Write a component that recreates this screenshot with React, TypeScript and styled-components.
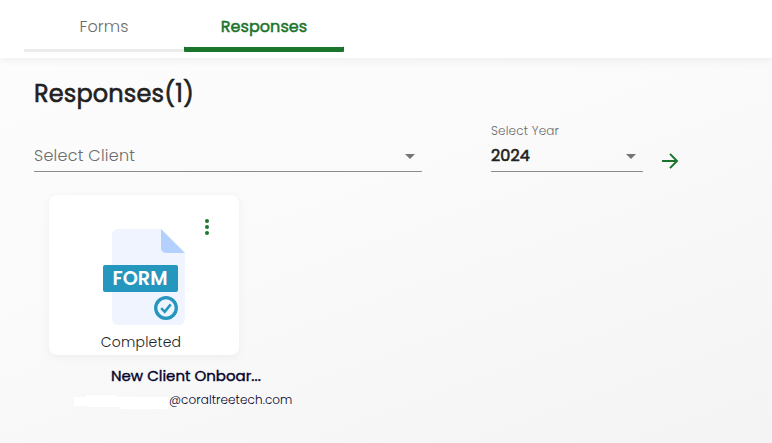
import styled, { createGlobalStyle } from "styled-components";

interface ITab {
  id: number;
  label: string;
}

interface ISelect {
  label?: string;
  value: string;
  width: number;
  isFilled?: boolean;
}

const tabs: ITab[] = [
  { id: 1, label: "Forms" },
  { id: 2, label: "Responses" },
];

const SelectField = ({ label, value, width, isFilled }: ISelect) => {
  return (
    <FieldWrapper $width={width}>
      <FieldLabel>{label}</FieldLabel>
      <FieldControl>
        <FieldValue $filled={isFilled}>{value}</FieldValue>
        <Caret width="10" height="5" viewBox="0 0 10 5">
          <path d="M0 0h10L5 5z" fill="#757575" />
        </Caret>
      </FieldControl>
    </FieldWrapper>
  );
};

const FormIcon = () => (
  <svg width="82" height="96" viewBox="0 0 82 96">
    <path
      d="M15 0H58L82 24V90a6 6 0 0 1-6 6H15a6 6 0 0 1-6-6V6a6 6 0 0 1 6-6z"
      fill="#eff4ff"
    />
    <path d="M58 0L82 24H63a5 5 0 0 1-5-5z" fill="#b3d0ff" />
    <rect x="0" y="36" width="75" height="27" rx="2" fill="#2596be" />
    <text
      x="9.5"
      y="56.4"
      fill="#fff"
      fontFamily="Poppins, Inter, sans-serif"
      fontSize="19.5"
      fontWeight="600"
      textLength="55"
      lengthAdjust="spacingAndGlyphs"
    >
      FORM
    </text>
    <circle cx="63" cy="79" r="10.3" fill="#eff4ff" stroke="#2596be" strokeWidth="3.3" />
    <path d="M58.2 79.2l3.5 3.7 6-7.5" fill="none" stroke="#2596be" strokeWidth="2.5" />
  </svg>
);

const App = () => {
  return (
    <>
      <GlobalStyle />
      <Page>
        <TabBar>
          {tabs.map((tab) => (
            <Tab key={tab.id} $active={tab.id === 2}>
              {tab.label}
            </Tab>
          ))}
        </TabBar>
        <Content>
          <Title>Responses(1)</Title>
          <Filters>
            <SelectField value="Select Client" width={388} />
            <SelectField label="Select Year" value="2024" width={152} isFilled />
            <ArrowButton aria-label="Apply">
              <svg width="16" height="16" viewBox="0 0 16 16">
                <path d="M0 8h15M8 .9L15 8l-7 7.1" fill="none" stroke="#1b742b" strokeWidth="2" />
              </svg>
            </ArrowButton>
          </Filters>
          <ResponseItem>
            <Card>
              <MenuButton aria-label="More">
                <svg width="4" height="16" viewBox="0 0 4 16">
                  <circle cx="2" cy="2" r="2" />
                  <circle cx="2" cy="8" r="2" />
                  <circle cx="2" cy="14" r="2" />
                </svg>
              </MenuButton>
              <IconWrapper>
                <FormIcon />
              </IconWrapper>
              <Status>Completed</Status>
            </Card>
            <FormName>New Client Onboar...</FormName>
            <EmailRow>
              <Redacted width="95" height="17" viewBox="0 0 95 17">
                <path d="M0 3h12V1h31v2h51v12H46v-2H12v-1H0z" fill="#fff" />
              </Redacted>
              <Email>@coraltreetech.com</Email>
            </EmailRow>
          </ResponseItem>
        </Content>
      </Page>
    </>
  );
};

export default App;

const GlobalStyle = createGlobalStyle`
  * {
    box-sizing: border-box;
  }
  body {
    margin: 0;
    overflow: hidden;
    font-family: Poppins, Inter, sans-serif;
  }
  svg {
    display: block;
    overflow: visible;
  }
`;

const Page = styled.div`
  height: 443px;
  display: flex;
  flex-direction: column;
  background: linear-gradient(160deg, #fdfdfd 0%, #fafafa 45%, #f4f4f4 100%);
`;

const TabBar = styled.div`
  display: flex;
  flex-shrink: 0;
  height: 58px;
  padding: 0 24px;
  background: #fff;
  box-shadow: 0 2px 8px rgba(0, 0, 0, 0.06);
`;

const Tab = styled.div<{ $active: boolean }>`
  width: 160px;
  height: 52px;
  padding-top: 15px;
  text-align: center;
  font-size: 16px;
  line-height: 24px;
  font-weight: ${({ $active }) => ($active ? 400 : 300)};
  -webkit-text-stroke: ${({ $active }) => ($active ? "0.5px #1b742b" : "0")};
  letter-spacing: ${({ $active }) => ($active ? 0.05 : 0.15)}px;
  color: ${({ $active }) => ($active ? "#1b742b" : "#6c6c6c")};
  /* the active indicator is thicker than the grey line */
  box-shadow: inset 0 ${({ $active }) => ($active ? "-5px #1b742b" : "-3px #ebebeb")};
  border-radius: ${({ $active }) => ($active ? "0 0 1px 1px" : "0")};
`;

const Content = styled.main`
  flex: 1;
  padding: 18px 34px 0;
`;

const Title = styled.h1`
  margin: 0;
  font-size: 24px;
  line-height: 36px;
  font-weight: 400;
  -webkit-text-stroke: 0.6px #212121;
  letter-spacing: 0.14px;
  color: #212121;
`;

const Filters = styled.div`
  display: flex;
  align-items: flex-end;
  height: 60px;

  & > :nth-child(2) {
    margin-left: 69px;
  }
`;

const FieldWrapper = styled.div<{ $width: number }>`
  width: ${({ $width }) => $width}px;
  height: 49px;
  border-bottom: 1px solid #8c8c8c;
`;

const FieldLabel = styled.div`
  height: 18px;
  font-size: 12px;
  line-height: 16px;
  font-weight: 300;
  letter-spacing: 0.18px;
  color: #6c6c6c;
`;

const FieldControl = styled.div`
  display: flex;
  align-items: center;
  justify-content: space-between;
  height: 30px;
  padding-right: 7px;
`;

const FieldValue = styled.span<{ $filled?: boolean }>`
  font-size: 16px;
  line-height: 24px;
  font-weight: ${({ $filled }) => ($filled ? 400 : 300)};
  -webkit-text-stroke: ${({ $filled }) => ($filled ? "0.6px #212121" : "0")};
  letter-spacing: ${({ $filled }) => ($filled ? 0.1 : 0.25)}px;
  color: ${({ $filled }) => ($filled ? "#212121" : "#6c6c6c")};
`;

const Caret = styled.svg`
  margin-top: 1px;
`;

const ArrowButton = styled.button`
  margin: 0 0 3px 19px;
  padding: 0;
  border: 0;
  background: none;
`;

const ResponseItem = styled.div`
  width: 260px;
  padding: 23px 0 0 15px;
`;

const Card = styled.div`
  position: relative;
  display: flex;
  flex-direction: column;
  align-items: center;
  width: 190px;
  height: 160px;
  padding-top: 34px;
  background: #fff;
  border-radius: 8px;
  box-shadow: 0 2px 10px rgba(0, 0, 0, 0.05);
`;

const MenuButton = styled.button`
  position: absolute;
  top: 24px;
  right: 30px;
  padding: 0;
  border: 0;
  background: none;
  fill: #1b7a2d;
`;

const IconWrapper = styled.div`
  width: 82px;
  height: 96px;
`;

const Status = styled.div`
  margin-top: 7px;
  padding-right: 6px;
  font-size: 14px;
  line-height: 21px;
  font-weight: 300;
  letter-spacing: 0.2px;
  color: #212121;
`;

const FormName = styled.div`
  padding: 10px 0 0 62px;
  font-size: 15px;
  line-height: 22px;
  font-weight: 400;
  -webkit-text-stroke: 0.4px #04042e;
  white-space: nowrap;
  color: #04042e;
`;

const EmailRow = styled.div`
  display: flex;
  align-items: center;
  height: 18px;
  margin: 4px 0 0 25px;
`;

const Redacted = styled.svg`
  flex-shrink: 0;
  margin-top: 4px;
`;

const Email = styled.span`
  font-size: 12px;
  line-height: 18px;
  font-weight: 300;
  letter-spacing: 0.08px;
  color: #04042e;
`;
